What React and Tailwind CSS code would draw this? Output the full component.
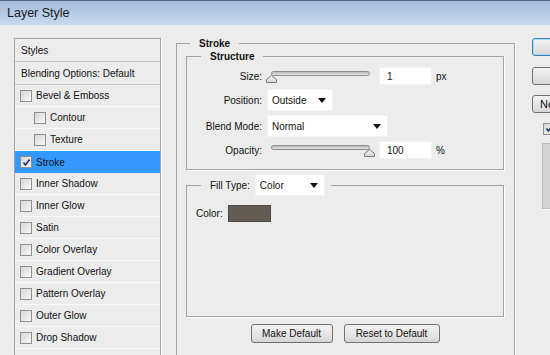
import React from "react";

const layers = [
  { label: "Bevel & Emboss" },
  { label: "Contour", indent: true },
  { label: "Texture", indent: true },
  { label: "Stroke", checked: true, active: true },
  { label: "Inner Shadow" },
  { label: "Inner Glow" },
  { label: "Satin" },
  { label: "Color Overlay" },
  { label: "Gradient Overlay" },
  { label: "Pattern Overlay" },
  { label: "Outer Glow" },
  { label: "Drop Shadow" },
  { label: "" },
];

function CheckBox({ checked, blank }) {
  if (blank) return <span className="w-[12px] h-[12px]" />;
  return (
    <span className="w-[12px] h-[12px] border border-[#8e8f8f] bg-gradient-to-br from-[#d6d6d6] to-[#f8f8f8] flex items-center justify-center shrink-0">
      {checked && (
        <svg width="9" height="9" viewBox="0 0 9 9">
          <path d="M1.5 4.5 L3.5 7 L7.5 1.5" fill="none" stroke="#1c2f6e" strokeWidth="1.6" />
        </svg>
      )}
    </span>
  );
}

function Slider({ value }) {
  return (
    <div className="relative w-[108px] h-[18px] shrink-0">
      <div className="absolute left-[4px] top-[4px] w-[99px] h-[5px] rounded-full border border-[#8c8c8c] bg-gradient-to-b from-[#b9b9b9] to-[#e4e4e4]" />
      <svg
        className={`absolute top-[8px] ${value === "max" ? "left-[97px]" : "left-[-1px]"}`}
        width="11"
        height="8"
        viewBox="0 0 11 8"
      >
        <defs>
          <linearGradient id="thumb" x1="0" y1="0" x2="0" y2="1">
            <stop offset="0" stopColor="#fafafa" />
            <stop offset="1" stopColor="#d2d2d2" />
          </linearGradient>
        </defs>
        <path d="M0.5 7.5 L0.5 4.5 L5.5 0.5 L10.5 4.5 L10.5 7.5 Z" fill="url(#thumb)" stroke="#7a7a7a" />
      </svg>
    </div>
  );
}

function Dropdown({ value, width }) {
  return (
    <div className={`${width} h-[22px] bg-white border border-[#f4f4f4] flex items-center justify-between pl-[4px] pr-[6px] shrink-0`}>
      <span>{value}</span>
      <svg width="8" height="5" viewBox="0 0 8 5">
        <path d="M0 0 H8 L4 5 Z" fill="#111" />
      </svg>
    </div>
  );
}

function NumberBox({ value }) {
  return (
    <div className="w-[53px] h-[18px] bg-white border border-[#f2f2f2] flex items-center pl-[7px] ml-[4px] shrink-0">
      {value}
    </div>
  );
}

function Row({ label, children, className = "" }) {
  return (
    <div className={`flex items-center ${className}`}>
      <span className="w-[76px] text-right pr-[1px]">{label}</span>
      <div className="flex items-center ml-[4px]">{children}</div>
    </div>
  );
}

function Button({ children, width }) {
  return (
    <button className={`${width} h-[19px] rounded-[3px] border border-[#707070] bg-gradient-to-b from-[#f3f3f3] via-[#e6e6e6] to-[#d5d5d5] text-[10px] leading-none`}>
      {children}
    </button>
  );
}

export default function App() {
  return (
    <div className="w-[550px] h-[355px] overflow-hidden bg-[#ececec] text-[10px] leading-[13px] text-[#111] font-['Liberation_Sans',Arial,sans-serif]">
      <div className="h-[25px] border-t border-[#56637a] bg-gradient-to-b from-[#a2bbda] to-[#c7daef] flex items-center pl-[7px] text-[12.5px] text-[#1a1a1a]">
        Layer Style
      </div>

      <div className="flex">
        <div className="ml-[14px] mt-[13px] w-[147px] border border-[#a3a3a3] shadow-[1px_1px_0_#fff] shrink-0">
          <div className="h-[23px] flex items-center pl-[6px] border-b border-[#c4c4c4]">Styles</div>
          <div className="h-[23px] flex items-center pl-[6px] border-b border-[#c4c4c4]">Blending Options: Default</div>
          {layers.map((l, i) => (
            <div
              key={i}
              className={`h-[22px] flex items-center gap-[4px] ${l.indent ? "pl-[19px]" : "pl-[5px]"} ${
                l.active ? "bg-[#3399ff]" : "border-b border-[#f9f9f9]"
              }`}
            >
              <CheckBox checked={l.checked} blank={!l.label} />
              <span>{l.label}</span>
            </div>
          ))}
        </div>

        <fieldset className="ml-[15px] mt-[12px] w-[339px] h-[340px] border border-[#a3a3a3] shadow-[1px_1px_0_#fff] pl-[9px] pr-[10px] shrink-0">
          <legend className="ml-[4px] px-[9px] font-bold">Stroke</legend>

          <fieldset className="border border-[#a3a3a3] shadow-[1px_1px_0_#fff] pb-[10px]">
            <legend className="ml-[14px] px-[9px] font-bold">Structure</legend>
            <Row label="Size:" className="mt-[4px] h-[18px]">
              <Slider value="min" />
              <NumberBox value="1" />
              <span className="ml-[4px]">px</span>
            </Row>
            <Row label="Position:" className="mt-[4px] h-[22px]">
              <Dropdown value="Outside" width="w-[66px]" />
            </Row>
            <Row label="Blend Mode:" className="mt-[4px] h-[22px]">
              <Dropdown value="Normal" width="w-[121px]" />
            </Row>
            <Row label="Opacity:" className="mt-[4px] h-[18px]">
              <Slider value="max" />
              <NumberBox value="100" />
              <span className="ml-[4px]">%</span>
            </Row>
          </fieldset>

          <fieldset className="mt-[4px] h-[143px] border border-[#a3a3a3] shadow-[1px_1px_0_#fff] pl-[9px]">
            <legend className="ml-[5px] pl-[9px] pr-[6px] flex items-center gap-[5px]">
              <span>Fill Type:</span>
              <Dropdown value="Color" width="w-[70px]" />
            </legend>
            <div className="mt-[9px] flex items-center gap-[5px]">
              <span>Color:</span>
              <span className="w-[43px] h-[17px] bg-[#635c55] border border-[#4e4944]" />
            </div>
          </fieldset>

          <div className="mt-[7px] flex justify-center gap-[11px]">
            <Button width="w-[82px]">Make Default</Button>
            <Button width="w-[96px]">Reset to Default</Button>
          </div>
        </fieldset>

        <div className="ml-[17px] mt-[13px] flex flex-col w-[80px] shrink-0">
          <button className="h-[18px] w-[75px] rounded-[3px] border border-[#3c7fb1] shadow-[inset_0_0_0_1px_#a8dcf7] bg-gradient-to-b from-[#f3f3f3] to-[#d8d8d8] text-[10px]">
            OK
          </button>
          <button className="mt-[11px] h-[18px] w-[75px] rounded-[3px] border border-[#707070] bg-gradient-to-b from-[#f3f3f3] to-[#d8d8d8] text-[10px]">
            Cancel
          </button>
          <button className="mt-[10px] h-[18px] w-[75px] rounded-[3px] border border-[#707070] bg-gradient-to-b from-[#f3f3f3] to-[#d8d8d8] text-[11px] text-left pl-[7px]">
            New Style...
          </button>
          <div className="mt-[9px] ml-[11px] flex items-center gap-[4px]">
            <CheckBox checked />
            <span>Preview</span>
          </div>
          <div className="mt-[8px] ml-[10px] w-[60px] h-[66px] bg-[#d4d4d4] border border-[#b9b9b9] shadow-[1px_1px_0_#fff]" />
        </div>
      </div>
    </div>
  );
}
